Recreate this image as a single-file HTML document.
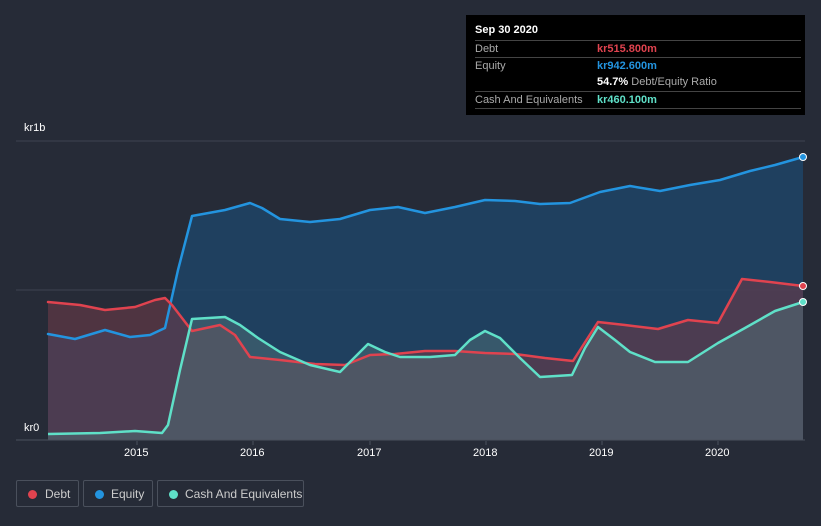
<!DOCTYPE html>
<html><head><style>
body{margin:0;width:821px;height:526px;background:#262b37;font-family:"Liberation Sans",sans-serif;overflow:hidden;position:relative}
.tip{position:absolute;left:466px;top:15px;width:339px;height:100px;background:#000;color:#fff;font-size:11px}
.tip .r{position:absolute;left:9px;right:4px;border-top:1px solid #444;height:17px;line-height:17px;color:#aaa}
.tip b{font-weight:bold}
.leg{position:absolute;top:480px;height:27px;border:1px solid #4a505c;border-radius:2px;color:#ccc;font-size:12px;line-height:27px;box-sizing:border-box}
.leg i{position:absolute;left:11px;top:9px;width:9px;height:9px;border-radius:50%}
.leg span{position:absolute;left:27px}
.ax{position:absolute;color:#fff;font-size:11px}
</style></head><body>
<svg width="821" height="526" style="position:absolute;left:0;top:0">
<line x1="16" y1="141" x2="805" y2="141" stroke="#3d4350"/>
<line x1="16" y1="290" x2="805" y2="290" stroke="#3d4350"/>
<polygon fill="#1e4466" fill-opacity="0.85" points="48,440 48,334 75,339 105,330 130,337 150,335 165,328 178,270 192,216 225,210 250,203 262,208 280,219 310,222 340,219 370,210 398,207 425,213 455,207 485,200 515,201 540,204 570,203 600,192 630,186 660,191 690,185 720,180 750,171 775,165 803,157 803,440"/>
<polygon fill="#6a3a48" fill-opacity="0.6" points="48,440 48,302 80,305 105,310 135,307 155,300 165,298 172,305 192,331 220,325 235,335 250,357 280,360 315,364 345,365 370,355 395,354 425,351 455,351 485,353 515,354 545,358 573,361 598,322 625,325 658,329 688,320 718,323 742,279 770,282 803,286 803,440"/>
<polygon fill="#4f7078" fill-opacity="0.5" points="48,440 48,434 100,433 135,431 162,433 168,425 180,370 192,319 225,317 240,325 258,338 280,352 310,365 340,372 355,357 368,344 385,352 400,357 430,357 455,355 470,340 485,331 500,338 520,358 540,377 572,375 585,348 598,327 615,340 630,352 655,362 688,362 718,343 745,328 775,311 803,302 803,440"/>
<g fill="none" stroke-width="2.5" stroke-linejoin="round" stroke-linecap="round">
<polyline stroke="#2394df" points="48,334 75,339 105,330 130,337 150,335 165,328 178,270 192,216 225,210 250,203 262,208 280,219 310,222 340,219 370,210 398,207 425,213 455,207 485,200 515,201 540,204 570,203 600,192 630,186 660,191 690,185 720,180 750,171 775,165 803,157"/>
<polyline stroke="#e0434f" points="48,302 80,305 105,310 135,307 155,300 165,298 172,305 192,331 220,325 235,335 250,357 280,360 315,364 345,365 370,355 395,354 425,351 455,351 485,353 515,354 545,358 573,361 598,322 625,325 658,329 688,320 718,323 742,279 770,282 803,286"/>
<polyline stroke="#5fe0c8" points="48,434 100,433 135,431 162,433 168,425 180,370 192,319 225,317 240,325 258,338 280,352 310,365 340,372 355,357 368,344 385,352 400,357 430,357 455,355 470,340 485,331 500,338 520,358 540,377 572,375 585,348 598,327 615,340 630,352 655,362 688,362 718,343 745,328 775,311 803,302"/>
</g>
<circle cx="803" cy="157" r="3.5" fill="#2394df" stroke="#fff" stroke-width="1"/>
<circle cx="803" cy="286" r="3.5" fill="#e0434f" stroke="#fff" stroke-width="1"/>
<circle cx="803" cy="302" r="3.5" fill="#5fe0c8" stroke="#fff" stroke-width="1"/>
<rect x="16" y="419" width="32" height="20" fill="#262b37"/>
<line x1="16" y1="440" x2="805" y2="440" stroke="#4a505c"/>
<g stroke="#4a505c"><line x1="137" y1="441" x2="137" y2="445"/><line x1="253" y1="441" x2="253" y2="445"/><line x1="370" y1="441" x2="370" y2="445"/><line x1="486" y1="441" x2="486" y2="445"/><line x1="602" y1="441" x2="602" y2="445"/><line x1="718" y1="441" x2="718" y2="445"/></g>
</svg>
<div class="ax" style="left:24px;top:122px">kr1b</div>
<div class="ax" style="left:24px;top:422px">kr0</div>
<div class="ax" style="left:124px;top:447px">2015</div>
<div class="ax" style="left:240px;top:447px">2016</div>
<div class="ax" style="left:357px;top:447px">2017</div>
<div class="ax" style="left:473px;top:447px">2018</div>
<div class="ax" style="left:589px;top:447px">2019</div>
<div class="ax" style="left:705px;top:447px">2020</div>
<div class="tip">
<div style="position:absolute;left:9px;top:9px;font-weight:bold;color:#fff">Sep 30 2020</div>
<div class="r" style="top:25px">Debt<b style="position:absolute;left:122px;color:#e0434f">kr515.800m</b></div>
<div class="r" style="top:42px">Equity<b style="position:absolute;left:122px;color:#2394df">kr942.600m</b></div>
<div class="r" style="top:59px;border:none"><span style="position:absolute;left:122px"><b style="color:#fff">54.7%</b> Debt/Equity Ratio</span></div>
<div class="r" style="top:76px">Cash And Equivalents<b style="position:absolute;left:122px;color:#5fe0c8">kr460.100m</b></div>
<div class="r" style="top:93px;height:0"></div>
</div>
<div class="leg" style="left:16px;width:63px"><i style="background:#e0434f"></i><span style="left:28px">Debt</span></div>
<div class="leg" style="left:83px;width:70px"><i style="background:#2394df"></i><span style="left:27px">Equity</span></div>
<div class="leg" style="left:157px;width:147px"><i style="background:#5fe0c8"></i><span>Cash And Equivalents</span></div>
</body></html>
